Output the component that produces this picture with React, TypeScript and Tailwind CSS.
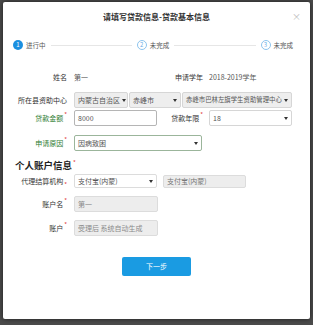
import type { ReactNode } from "react";

const font = { fontFamily: '"Noto Sans CJK SC", "Noto Sans", sans-serif' };

function Caret() {
  return (
    <svg width="4" height="3" viewBox="0 0 4 3" className="shrink-0">
      <path d="M0 0h4L2 3z" fill="#333" />
    </svg>
  );
}

function Label({
  text,
  req,
  green,
  className = "w-[64px]"
}: {
  text: string;
  req?: boolean;
  green?: boolean;
  className?: string;
}) {
  return (
    <div className={`flex shrink-0 items-start justify-end ${className}`}>
      <span
        className={`text-[7px] leading-[10px] ${green ? "text-[#2f7d32]" : "text-[#333]"}`}
      >
        {text}
      </span>
      {req ? (
        <span className="ml-[1px] -mt-[2px] text-[6px] leading-[8px] text-[#e23b3b]">*</span>
      ) : null}
    </div>
  );
}

function Select({
  value,
  className,
  h = "h-[16px]",
  size = "text-[7px]"
}: {
  value: string;
  className: string;
  h?: string;
  size?: string;
}) {
  return (
    <div
      className={`flex shrink-0 items-center justify-between gap-[2px] rounded-[2px] border px-[3px] ${h} ${className}`}
    >
      <span className={`whitespace-nowrap leading-[10px] text-[#555] ${size}`}>{value}</span>
      <Caret />
    </div>
  );
}

function Disabled({ value, className }: { value: string; className: string }) {
  return (
    <div
      className={`flex h-[16px] shrink-0 items-center rounded-[2px] border border-[#dcdcdc] bg-[#ededed] px-[3px] ${className}`}
    >
      <span className="text-[7px] leading-[10px] text-[#8a8a8a]">{value}</span>
    </div>
  );
}

function Row({ children, className = "" }: { children: ReactNode; className?: string }) {
  return <div className={`flex items-center ${className}`}>{children}</div>;
}

function Step({ n, text, active }: { n: number; text: string; active?: boolean }) {
  return (
    <div className="flex shrink-0 items-center gap-[3px]">
      <div
        className={`flex h-[10px] w-[10px] items-center justify-center rounded-full text-[6px] leading-none ${
          active
            ? "bg-[#1b8fe0] text-white"
            : "border border-[#8cc4ee] text-[#6aaee6]"
        }`}
      >
        {n}
      </div>
      <span className="text-[6.5px] leading-[10px] text-[#555]">{text}</span>
    </div>
  );
}

export default function App() {
  return (
    <div className="h-[325px] w-[313px] bg-[#4b4b4b] pl-[3px] pt-[2px]" style={font}>
      <div className="h-[317px] w-[307px] rounded-[2px] bg-white shadow-[0_0_5px_rgba(0,0,0,0.6)]">
        <div className="grid h-[29px] grid-cols-[1fr_auto_1fr] items-center">
          <div />
          <h1 className="text-[8px] font-semibold leading-[10px] text-[#333]">
            请填写贷款信息-贷款基本信息
          </h1>
          <div className="flex justify-end pr-[9px]">
            <span className="text-[9px] leading-none text-[#bbb]">×</span>
          </div>
        </div>

        <div className="mt-[9px] flex h-[10px] items-center gap-[5px] pl-[10px] pr-[17px]">
          <Step n={1} text="进行中" active />
          <div className="h-px flex-1 bg-[#e6e6e6]" />
          <Step n={2} text="未完成" />
          <div className="h-px flex-1 bg-[#e6e6e6]" />
          <Step n={3} text="未完成" />
        </div>

        <Row className="mt-[22px] h-[10px]">
          <Label text="姓名" />
          <span className="ml-[7px] w-[83px] text-[7px] leading-[10px] text-[#555]">第一</span>
          <Label text="申请学年" className="w-[46px]" />
          <span className="ml-[6px] text-[7px] leading-[10px] text-[#555]">2018-2019学年</span>
        </Row>

        <Row className="mt-[10px]">
          <Label text="所在县资助中心" />
          <Select value="内蒙古自治区" className="ml-[7px] w-[54px] border-[#d6d6d6] bg-[#eeeeee]" />
          <Select value="赤峰市" className="ml-px w-[52px] border-[#d6d6d6] bg-[#eeeeee]" />
          <Select
            value="赤峰市巴林左旗学生资助管理中心"
            size="text-[6.4px]"
            className="ml-px w-[110px] border-[#d6d6d6] bg-[#eeeeee]"
          />
        </Row>

        <Row className="mt-[2px]">
          <Label text="贷款金额" req green />
          <div className="ml-[7px] flex h-[16px] w-[83px] items-center rounded-[2px] border border-[#b5b5b5] bg-white px-[3px]">
            <span className="text-[7px] leading-[10px] text-[#555]">8000</span>
          </div>
          <Label text="贷款年限" req className="w-[46px]" />
          <Select value="18" className="ml-[6px] w-[83px] border-[#d6d6d6] bg-white" />
        </Row>

        <Row className="mt-[9px]">
          <Label text="申请原因" req green />
          <Select value="因病致困" className="ml-[7px] w-[128px] border-[#9bb59b] bg-white" />
        </Row>

        <div className="mt-[8px] flex h-[12px] items-start pl-[12px]">
          <span className="text-[9.5px] font-bold leading-[12px] text-[#222]">个人账户信息</span>
          <span className="ml-px text-[6px] leading-[8px] text-[#e23b3b]">*</span>
        </div>

        <Row className="mt-[2px]">
          <div className="flex w-[64px] shrink-0 items-center justify-end">
            <span className="text-[7px] leading-[10px] text-[#333]">代理结算机构</span>
            <span className="ml-px mt-[8px] text-[6px] leading-[8px] text-[#e23b3b]">*</span>
          </div>
          <Select
            value="支付宝(内蒙)"
            h="h-[14px]"
            className="ml-[7px] w-[83px] border-[#dcdcdc] bg-white"
          />
          <div className="ml-[6px] flex h-[13px] w-[83px] items-center rounded-[2px] border border-[#dcdcdc] bg-[#ededed] px-[3px]">
            <span className="text-[7px] leading-[10px] text-[#777]">支付宝(内蒙)</span>
          </div>
        </Row>

        <Row className="mt-[7px]">
          <Label text="账户名" req />
          <Disabled value="第一" className="ml-[7px] w-[84px]" />
        </Row>

        <Row className="mt-[8px]">
          <Label text="账户" req />
          <Disabled value="受理后 系统自动生成" className="ml-[7px] w-[84px]" />
        </Row>

        <div className="mt-[21px] flex justify-center">
          <button className="flex h-[19px] w-[69px] items-center justify-center rounded-[2px] bg-[#1a9be2] text-[7px] text-white">
            下一步
          </button>
        </div>
      </div>
    </div>
  );
}
